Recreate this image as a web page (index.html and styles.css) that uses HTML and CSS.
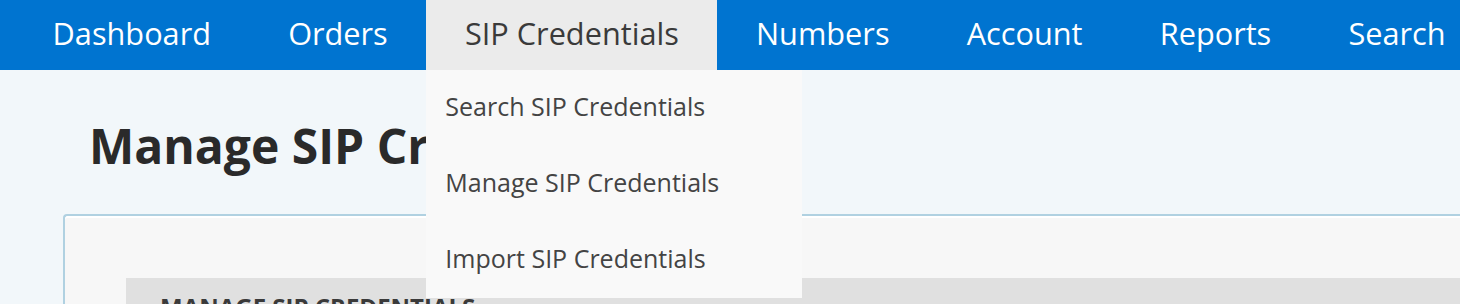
FILE: index.html
```html
<!DOCTYPE html>
<html lang="en">
<head>
    <meta charset="UTF-8">
    <meta name="viewport" content="width=device-width, initial-scale=1.0">
    <title>Manage SIP Credentials</title>
    <link rel="stylesheet" href="styles.css">
</head>
<body>
    <nav class="topnav">
        <ul class="nav-list">
            <li class="nav-item"><a href="#">Dashboard</a></li>
            <li class="nav-item"><a href="#">Orders</a></li>
            <li class="nav-item open">
                <a href="#">SIP Credentials</a>
                <ul class="dropdown">
                    <li><a href="#">Search SIP Credentials</a></li>
                    <li><a href="#">Manage SIP Credentials</a></li>
                    <li><a href="#">Import SIP Credentials</a></li>
                </ul>
            </li>
            <li class="nav-item"><a href="#">Numbers</a></li>
            <li class="nav-item"><a href="#">Account</a></li>
            <li class="nav-item"><a href="#">Reports</a></li>
            <li class="nav-item"><a href="#">Search</a></li>
        </ul>
    </nav>

    <main class="content">
        <h1 class="page-title">Manage SIP Credentials</h1>

        <div class="panel">
            <div class="section">
                <h2 class="section-title">Manage SIP Credentials</h2>
            </div>
        </div>
    </main>
</body>
</html>
```

FILE: styles.css
```css
body {
    margin: 0;
    font-family: "Open Sans", "DejaVu Sans", sans-serif;
    background: #f2f7fa;
    color: #333;
    overflow: hidden;
}
a {
    text-decoration: none;
    color: inherit;
}
.topnav {
    background: #0074d0;
    height: 70px;
    padding-left: 14px;
}
.nav-list {
    display: flex;
    margin: 0;
    padding: 0;
    list-style: none;
    height: 100%;
}
.nav-item {
    position: relative;
    flex-shrink: 0;
}
.nav-item > a {
    display: block;
    height: 70px;
    line-height: 66px;
    padding: 0 38.6px;
    font-size: 30.7px;
    color: #fff;
    white-space: nowrap;
}
.nav-item.open > a {
    background: #ebebeb;
    color: #3a3a3a;
}
.dropdown {
    position: absolute;
    top: 70px;
    left: 0;
    width: 376px;
    margin: 0;
    padding: 0;
    list-style: none;
    background: #f9f9f9;
    z-index: 10;
}
.dropdown a {
    display: block;
    height: 76px;
    line-height: 72px;
    padding: 0 19px;
    font-size: 25px;
    color: #444;
    white-space: nowrap;
}
.content {
    padding: 0 0 0 63px;
}
.page-title {
    margin: 0;
    padding: 43px 0 35px 26px;
    font-size: 48px;
    font-weight: 700;
    color: #2a2a2a;
    line-height: 66px;
}
.panel {
    border: 2px solid #b0d1e1;
    border-right: none;
    border-top-left-radius: 4px;
    background: #f7f7f7;
    box-shadow: inset 0 2px 0 #fff;
    padding: 62px 0 0 61px;
    height: 300px;
}
.section {
    background: #e0e0e0;
    padding: 12px 34px;
}
.section-title {
    margin: 0;
    font-size: 24px;
    font-weight: 700;
    text-transform: uppercase;
    color: #3a3a3a;
}
```
